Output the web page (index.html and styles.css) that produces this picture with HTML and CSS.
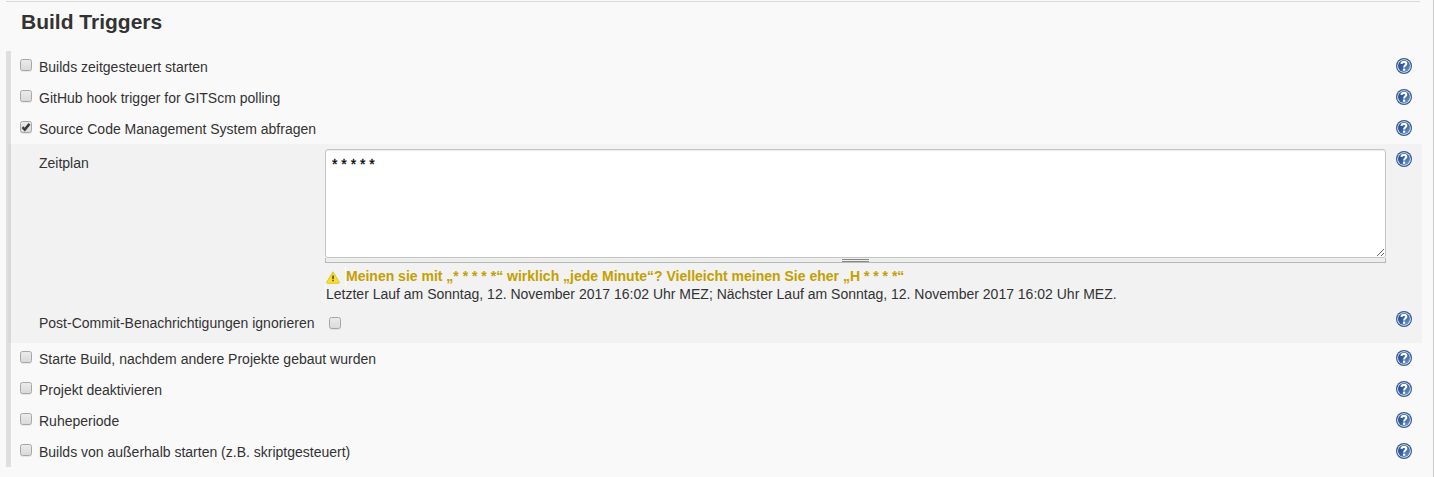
FILE: index.html
```html
<!DOCTYPE html>
<html lang="de">
<head>
<meta charset="utf-8">
<title>Build Triggers</title>
<link rel="stylesheet" href="styles.css">
</head>
<body>
<svg class="defs" width="0" height="0" aria-hidden="true">
  <defs>
    <linearGradient id="blue" x1="0" y1="0" x2="1" y2="1">
      <stop offset="0" stop-color="#23498c"/><stop offset=".5" stop-color="#37619f"/><stop offset="1" stop-color="#7fa6d2"/>
    </linearGradient>
    <linearGradient id="yellow" x1="0" y1="0" x2="0" y2="1">
      <stop offset="0" stop-color="#f0d838"/><stop offset="1" stop-color="#f8e22c"/>
    </linearGradient>
    <symbol id="help" viewBox="0 0 16 16">
      <circle cx="8" cy="8" r="8" fill="#345a98"/>
      <circle cx="8" cy="8" r="6.8" fill="#e9eff7"/>
      <circle cx="8" cy="8" r="6" fill="url(#blue)"/>
      <path d="M5.4 5.9C5.6 4.4 6.6 3.9 8 3.9C9.5 3.9 10.3 4.7 10.3 5.8C10.3 7.3 8.1 7.3 8.1 9.4" fill="none" stroke="#fff" stroke-width="2.1"/>
      <rect x="7" y="10.6" width="2.2" height="2.2" fill="#fff"/>
    </symbol>
  </defs>
</svg>
<main class="page">
  <h1 class="title">Build Triggers</h1>
  <div class="triggers">
    <div class="row"><input class="check" type="checkbox"><label class="label">Builds zeitgesteuert starten</label><svg class="help"><use href="#help"/></svg></div>
    <div class="row"><input class="check" type="checkbox"><label class="label">GitHub hook trigger for GITScm polling</label><svg class="help"><use href="#help"/></svg></div>
    <div class="row"><span class="check checked"><svg width="12" height="12" viewBox="0 0 12 12"><path d="M2.5 6.2L4.8 8.6L9.5 2.9" fill="none" stroke="#3b3b3b" stroke-width="2.5"/></svg></span><label class="label">Source Code Management System abfragen</label><svg class="help"><use href="#help"/></svg></div>
    <section class="nested">
      <div class="schedule">
        <label class="name">Zeitplan</label>
        <div class="field">
          <textarea class="spec" spellcheck="false">* * * * *</textarea>
          <div class="handle"><span class="grip"></span></div>
          <div class="warning">
            <svg class="alert" width="14" height="13" viewBox="0 0 14 13"><path d="M7 .8L13.3 11.2Q13.5 12.3 12.5 12.3H1.5Q.5 12.3 .7 11.2Z" fill="url(#yellow)" stroke="#dfc526" stroke-linejoin="round"/><path d="M7 4.5V8" stroke="#5c5628" stroke-width="1.7"/><path d="M7 8.8V10.3" stroke="#5c5628" stroke-width="1.7"/></svg>
            <span class="message">Meinen sie mit „* * * * *“ wirklich „jede Minute“? Vielleicht meinen Sie eher „H * * * *“</span>
          </div>
          <div class="runs">Letzter Lauf am Sonntag, 12. November 2017 16:02 Uhr MEZ; Nächster Lauf am Sonntag, 12. November 2017 16:02 Uhr MEZ.</div>
        </div>
        <svg class="help"><use href="#help"/></svg>
      </div>
      <div class="ignore">
        <label class="name">Post-Commit-Benachrichtigungen ignorieren</label>
        <input class="check" type="checkbox">
        <svg class="help"><use href="#help"/></svg>
      </div>
    </section>
    <div class="row"><input class="check" type="checkbox"><label class="label">Starte Build, nachdem andere Projekte gebaut wurden</label><svg class="help"><use href="#help"/></svg></div>
    <div class="row"><input class="check" type="checkbox"><label class="label">Projekt deaktivieren</label><svg class="help"><use href="#help"/></svg></div>
    <div class="row"><input class="check" type="checkbox"><label class="label">Ruheperiode</label><svg class="help"><use href="#help"/></svg></div>
    <div class="row"><input class="check" type="checkbox"><label class="label">Builds von außerhalb starten (z.B. skriptgesteuert)</label><svg class="help"><use href="#help"/></svg></div>
  </div>
</main>
</body>
</html>
```
FILE: styles.css
```css
* { box-sizing: border-box; }
body {
  margin: 0;
  background: #f9f9f9;
  color: #333;
  font: 14px/18px "Liberation Sans", Arial, sans-serif;
}
.defs { display: block; }
.page {
  height: 477px;
  padding: 1px 11px 0 6px;
  border-right: 1px solid #ccc;
  overflow: hidden;
}
.title {
  height: 50px;
  margin: 0 2px 0 0;
  padding: 8px 0 0 15px;
  border-top: 1px solid #d9d9d9;
  font-size: 21px;
  line-height: 24px;
}
.triggers { border-left: 5px solid #dfdfdf; }
.row {
  display: flex;
  align-items: flex-start;
  height: 31px;
  padding: 7px 10px 0 9px;
}
.label { flex: 1; }
.check {
  appearance: none;
  flex: none;
  width: 12px;
  height: 12px;
  margin: 1px 7px 0 0;
  border: 1px solid #a6a6a6;
  border-radius: 2.5px;
  background: linear-gradient(#ebebeb, #dadada);
  box-shadow: 0 1px 0 rgba(0, 0, 0, .07);
}
.checked svg { display: block; margin: -1px; }
.help { flex: none; width: 16px; height: 16px; }
.nested {
  height: 199px;
  margin-left: -3px;
  padding: 5px 10px 0 31px;
  border-left: 3px solid #d9d9d9;
  background: #f2f2f2;
}
.schedule { display: flex; height: 160px; }
.schedule .name { width: 286px; margin-left: -3px; padding-top: 5px; }
.schedule .help { margin: 2px 0 0 10px; }
.field { flex: 1; }
.spec {
  display: block;
  width: 100%;
  height: 109px;
  padding: 4px 6px;
  border: 1px solid #c5c5c5;
  border-radius: 3px;
  box-shadow: inset 0 1px 1px rgba(0, 0, 0, .08);
  background: #fff;
  color: #000;
  font: inherit;
  line-height: 20px;
  -webkit-text-stroke: .3px #000;
  outline: 0;
}
.handle {
  height: 5px;
  padding-top: 1px;
  border: solid #b9b9b3;
  border-width: 0 1px 1px;
  background: #eee;
}
.grip {
  display: block;
  width: 27px;
  height: 3px;
  margin: 0 auto;
  border: solid #888;
  border-width: 1px 0;
}
.warning {
  display: flex;
  align-items: flex-start;
  height: 22px;
  padding: 4px 0 0 1px;
  color: #c4a000;
  font-weight: bold;
}
.alert { margin: 4px 5px 0 0; }
.message { border-left: 1px solid #fff; }
.runs { border-left: 1px solid #fff; }
.ignore { display: flex; align-items: flex-start; padding-top: 2px; }
.ignore .name { margin: 3px 15px 0 -3px; }
.ignore .check { margin-top: 6px; }
.ignore .help { margin-left: auto; }
```
